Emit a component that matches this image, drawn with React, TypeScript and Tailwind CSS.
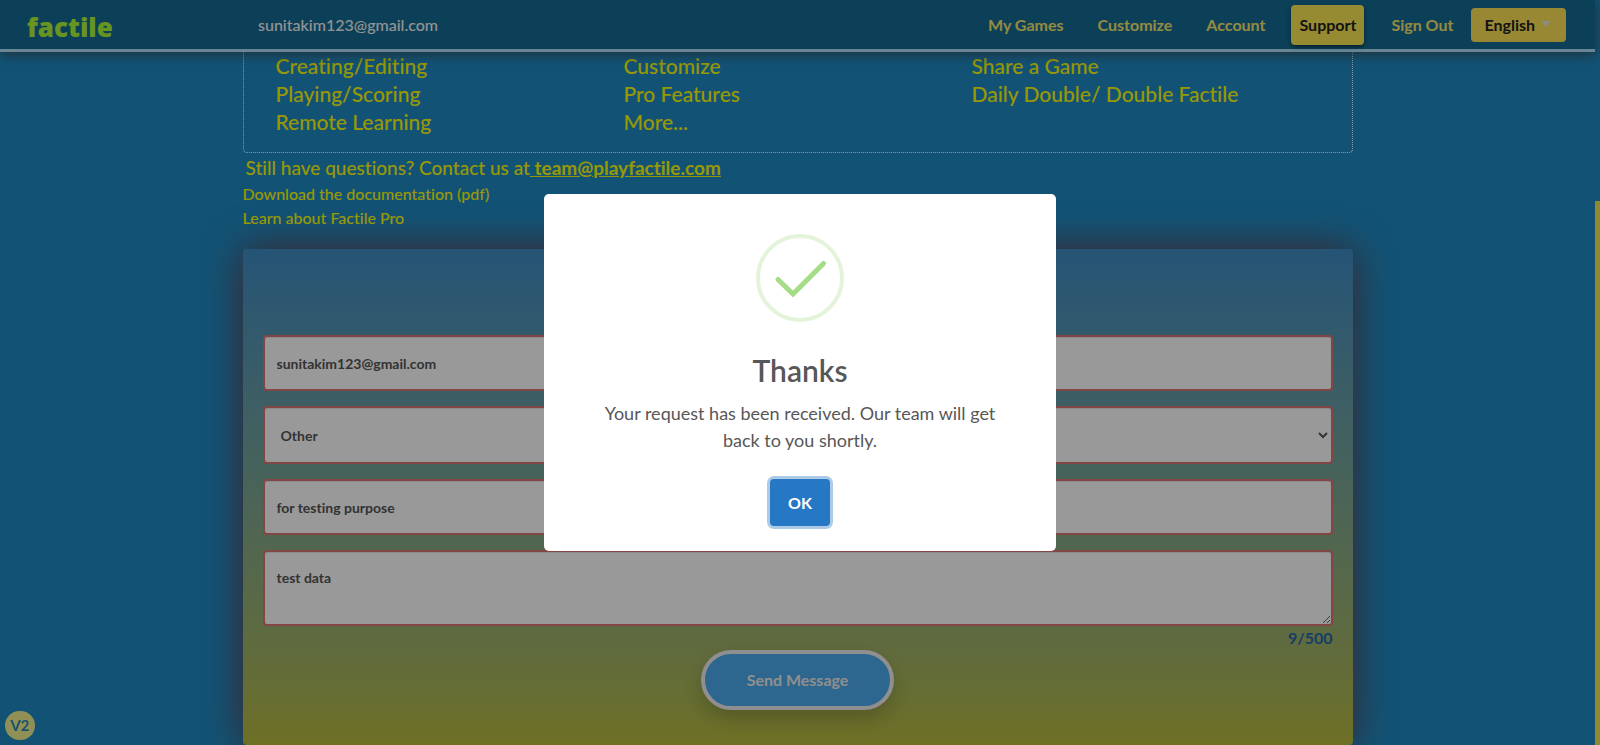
import { useState } from "react";

const topicColumns = [
  ["Creating/Editing", "Playing/Scoring", "Remote Learning"],
  ["Customize", "Pro Features", "More..."],
  ["Share a Game", "Daily Double/ Double Factile"],
];

const fieldClass =
  "block w-full rounded-[4px] border-2 border-[#dc7373] bg-white px-3 text-[14px] font-bold text-[#555] shadow-[inset_0_1px_1px_rgba(0,0,0,0.1)] outline-none";

function Header() {
  return (
    <header className="relative z-10 flex h-[52px] items-center border-b-[3px] border-[#aee0f5] bg-[#146b94] pr-[29px] pl-[27px] shadow-[0_2px_12px_rgba(60,60,60,0.8)]">
      <a href="#home" className="w-[231px] pt-1 font-['Open_Sans'] text-[26px] leading-none font-extrabold text-[#adf739]">
        factile
      </a>
      <span className="text-[16px] font-medium text-[#f5f5f5]">sunitakim123@gmail.com</span>
      <nav className="ml-auto flex items-center text-[16px] font-bold text-[#f7e66c]">
        <a href="#games" className="mr-[34px]">My Games</a>
        <a href="#customize" className="mr-[34px]">Customize</a>
        <a href="#account" className="mr-[26px]">Account</a>
        <a href="#support" className="mr-[27px] rounded-[4px] bg-[#fae855] px-2 leading-10 text-[#222] shadow-[0_2px_4px_rgba(0,0,0,0.5)]">
          Support
        </a>
        <a href="#signout" className="mr-[18px]">Sign Out</a>
        <button className="flex h-[34px] items-center gap-[7px] rounded-[4px] bg-[#ffe355] pr-4 pl-[13px] text-[#222]">
          English
          <span className="mb-px h-0 w-0 border-x-4 border-t-[6px] border-x-transparent border-t-[#e8e8e8]" />
        </button>
      </nav>
    </header>
  );
}

function Topics() {
  return (
    <section className="grid grid-cols-3 rounded-b-[4px] border border-t-0 border-dotted border-white px-8 pb-4">
      {topicColumns.map((topics) => (
        <ul key={topics[0]} className="text-[21px] leading-7 font-medium">
          {topics.map((topic) => (
            <li key={topic}>
              <a href="#topic" className="whitespace-nowrap">{topic}</a>
            </li>
          ))}
        </ul>
      ))}
    </section>
  );
}

function ContactForm() {
  const [message, setMessage] = useState("test data");
  return (
    <form
      onSubmit={(e) => e.preventDefault()}
      className="mt-[19px] flex flex-col gap-[15px] rounded-[4px] bg-linear-to-b from-[#3e8cc5] to-[#b7bb3c] px-5 pt-[86px] pb-[35px] shadow-[0_0_40px_#6b3d44]"
    >
      <input aria-label="Email" type="email" defaultValue="sunitakim123@gmail.com" className={`${fieldClass} h-14`} />
      <select aria-label="Topic" className={`${fieldClass} h-[58px]`}>
        <option>Other</option>
      </select>
      <input aria-label="Subject" defaultValue="for testing purpose" className={`${fieldClass} h-14`} />
      <div>
        <textarea
          aria-label="Message"
          value={message}
          maxLength={500}
          onChange={(e) => setMessage(e.target.value)}
          className={`${fieldClass} h-[76px] resize-y py-[15px]`}
        />
        <p className="text-right text-[16px] leading-6 font-bold text-[#2567aa]">{message.length}/500</p>
        <button className="mx-auto block h-[60px] w-[193px] rounded-full border-4 border-[#eee] bg-[#4baaed] text-[16px] font-bold text-[#eee] shadow-[0_8px_20px_rgba(0,0,0,0.2)]">
          Send Message
        </button>
      </div>
    </form>
  );
}

function ThanksDialog() {
  return (
    <div className="fixed inset-0 z-20 grid place-items-center bg-black/40">
      <div role="dialog" aria-labelledby="thanks" className="flex w-[512px] flex-col items-center rounded-[5px] bg-white px-12 pt-10 pb-[25px] text-[#575757]">
        <svg viewBox="0 0 88 88" className="h-[88px] w-[88px]" fill="none">
          <circle cx="44" cy="44" r="42" stroke="#e4f4db" strokeWidth="4" />
          <path d="M22 45.5 L37 60 L67.500 29.500" stroke="#a5dc86" strokeWidth="5" strokeLinecap="round" />
        </svg>
        <h2 id="thanks" className="mt-7 text-[30px] leading-10 font-semibold">Thanks</h2>
        <p className="mt-[10px] text-center text-[18px] leading-[27px]">
          Your request has been received. Our team will get back to you shortly.
        </p>
        <button className="mt-[25px] h-[47px] w-[60px] rounded-[4px] bg-[#2778c4] text-[16px] font-bold text-white ring-3 ring-[#adcae6]">
          OK
        </button>
      </div>
    </div>
  );
}

export default function App() {
  return (
    <div className="flex h-screen overflow-hidden bg-[#1e8ac3] font-['Lato',sans-serif] [font-variant-ligatures:none]">
      <div className="min-w-0 flex-1">
        <Header />
        <main className="mx-auto max-w-[1110px] text-[#fdfd08]">
          <Topics />
          <p className="pl-[3px] text-[19px] leading-[29px] font-medium">
            Still have questions? Contact us at
            <a href="mailto:team@playfactile.com" className="font-bold whitespace-pre underline"> team@playfactile.com</a>
          </p>
          <ul className="text-[16px] leading-6 font-medium">
            <li><a href="#pdf">Download the documentation (pdf)</a></li>
            <li><a href="#pro">Learn about Factile Pro</a></li>
          </ul>
          <ContactForm />
        </main>
      </div>
      <div className="flex w-[5px] flex-col justify-end">
        <div className="h-[73%] bg-[#f2e452]" />
      </div>
      <div className="fixed bottom-[5px] left-[5px] grid h-[29px] w-[30px] place-items-center rounded-full bg-[#f0ef90] text-[15px] font-bold text-[#2a86b5]">
        V2
      </div>
      <ThanksDialog />
    </div>
  );
}
